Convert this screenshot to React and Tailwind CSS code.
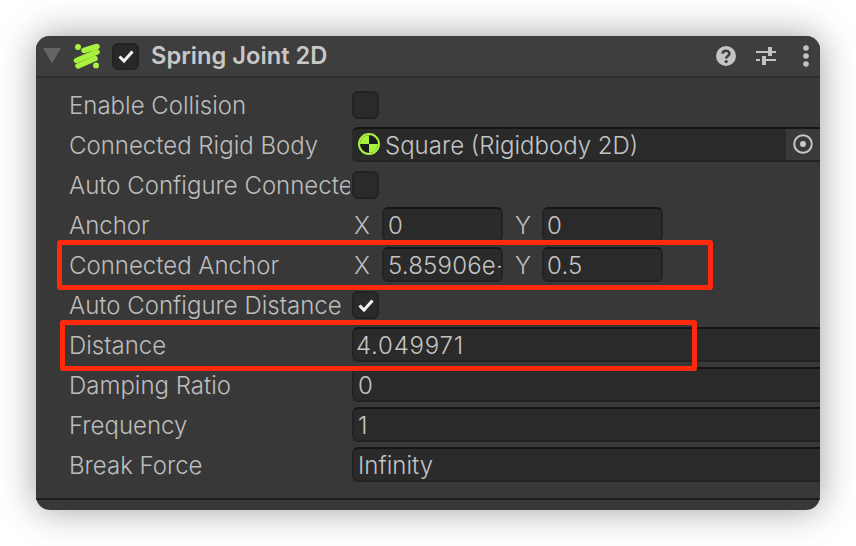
import React from 'react';

function SpringIcon() {
  return (
    <svg width="28" height="28" viewBox="0 0 28 28" className="shrink-0">
      <circle cx="6" cy="5" r="3" fill="#a9f23f" />
      <circle cx="24" cy="23.5" r="3" fill="#a9f23f" />
      <g stroke="#a9f23f" strokeWidth="5.5" strokeLinecap="round" fill="none">
        <path d="M12 8.5 L25 4.5" />
        <path d="M4.5 18.5 L25 10" />
        <path d="M6 24 L23 16.5" />
      </g>
    </svg>
  );
}

function Check() {
  return (
    <svg width="20" height="20" viewBox="0 0 20 20">
      <path d="M3.5 10.5 L8 15 L16.5 5.5" stroke="#f2f2f2" strokeWidth="3" fill="none" />
    </svg>
  );
}

function CheckBox({ checked }) {
  return (
    <div className="w-[27px] h-[28px] ml-[2px] shrink-0 rounded-md bg-[#2a2a2a] border-2 border-[#222222] flex items-center justify-center">
      {checked && <Check />}
    </div>
  );
}

function Field({ children, className }) {
  return (
    <div className={'h-[35px] mb-[2px] pt-[4px] rounded-md bg-[#2a2a2a] border-2 border-[#232323] border-t-[#161616] overflow-hidden whitespace-nowrap flex items-center text-[#c4c4c4] ' + className}>
      {children}
    </div>
  );
}

function Row({ label, children }) {
  return (
    <div className="h-10 flex items-center">
      <div className="w-[281px] pt-[1px] shrink-0 overflow-hidden whitespace-nowrap text-[#bdbdbd]">{label}</div>
      {children}
    </div>
  );
}

function Vector({ x, y }) {
  return (
    <div className="flex items-center text-[#bdbdbd] ml-[2px]">
      <span className="w-[30px] pl-[2px] pt-[1px]">X</span>
      <Field className="w-[121px] pl-[4px] tracking-[0.2px]">{x}</Field>
      <span className="w-[39px] pl-[12px] pt-[1px]">Y</span>
      <Field className="w-[121px] pl-[3px] tracking-[0.2px]">{y}</Field>
    </div>
  );
}

export default function App() {
  return (
    <div className="w-[856px] h-[546px] bg-white pt-[36px] pl-[36px] font-['Inter',sans-serif] font-[350] text-[24px] relative overflow-hidden">
      <div className="w-[784px] h-[474px] rounded-[14px] overflow-hidden bg-[#383838] shadow-[0_0_36px_rgba(0,0,0,0.38)] flex flex-col">
        {/* Header */}
        <div className="h-[42px] shrink-0 bg-[#3e3e3e] border-b-2 border-[#2e2e2e] flex items-center pl-[7px] pr-[8px]">
          <svg width="18" height="16" viewBox="0 0 18 16" className="shrink-0">
            <path d="M0 0 H18 L9 15.5 Z" fill="#646464" />
          </svg>
          <div className="ml-[11px]"><SpringIcon /></div>
          <div className="ml-[12px]">
            <div className="w-[27px] h-[27px] rounded-md bg-[#282828] border-2 border-[#222222] flex items-center justify-center"><Check /></div>
          </div>
          <div className="ml-[12px] font-semibold text-[23.7px] text-[#c8c8c8] whitespace-nowrap">Spring Joint 2D</div>
          <div className="ml-auto flex items-center">
            <svg width="20" height="20" viewBox="0 0 20 20">
              <circle cx="10" cy="10" r="10" fill="#c4c4c4" />
              <path d="M6.6 7.6 C6.8 3.8 13.4 3.8 13.4 7.6 C13.4 10 10.2 10 10.2 12.4" stroke="#3e3e3e" strokeWidth="2.6" fill="none" />
              <circle cx="10.2" cy="15.6" r="1.6" fill="#3e3e3e" />
            </svg>
            <svg width="22" height="20" viewBox="0 0 22 20" className="ml-[19px]">
              <g fill="#c4c4c4">
                <rect x="1" y="5" width="12" height="2" />
                <rect x="13" y="1" width="4" height="9" />
                <rect x="17" y="5" width="4" height="2" />
                <rect x="1" y="13" width="4" height="2" />
                <rect x="7" y="10" width="4" height="9" />
                <rect x="11" y="13" width="10" height="2" />
              </g>
            </svg>
            <svg width="8" height="22" viewBox="0 0 8 22" className="ml-[25px] mr-[2px]">
              <g fill="#c4c4c4">
                <circle cx="4" cy="3" r="2.8" />
                <circle cx="4" cy="11" r="2.8" />
                <circle cx="4" cy="19" r="2.8" />
              </g>
            </svg>
          </div>
        </div>

        {/* Properties */}
        <div className="pl-[33px] pt-[7px]">
          <Row label="Enable Collision"><CheckBox /></Row>
          <Row label="Connected Rigid Body">
            <div className="flex-1 ml-[2px] h-[35px] mb-[2px] rounded-l-md bg-[#2a2a2a] border-y-2 border-[#232323] border-t-[#161616] flex items-center overflow-hidden text-[#c4c4c4]">
              <svg width="22" height="22" viewBox="0 0 22 22" className="ml-[6px] shrink-0">
                <circle cx="11" cy="11" r="10" fill="#1d1d1d" stroke="#a9f23f" strokeWidth="2" />
                <path d="M11 11 V2 A9 9 0 0 0 2 11 Z" fill="#a9f23f" />
                <path d="M11 11 V20 A9 9 0 0 0 20 11 Z" fill="#a9f23f" />
              </svg>
              <span className="ml-[5px] mt-[3px] whitespace-nowrap">Square (Rigidbody 2D)</span>
              <div className="ml-auto w-[34px] h-full bg-[#3a3a3a] flex items-center justify-center">
                <svg width="20" height="20" viewBox="0 0 20 20">
                  <circle cx="10" cy="10" r="8.8" stroke="#c8c8c8" strokeWidth="2" fill="none" />
                  <circle cx="10" cy="10" r="3" fill="#c8c8c8" />
                </svg>
              </div>
            </div>
          </Row>
          <Row label="Auto Configure Connected Anchor"><CheckBox /></Row>
          <Row label="Anchor"><Vector x="0" y="0" /></Row>
          <Row label="Connected Anchor"><Vector x="5.85906e-" y="0.5" /></Row>
          <Row label="Auto Configure Distance"><CheckBox checked /></Row>
          <Row label="Distance"><Field className="flex-1 ml-[2px] pl-[2px] rounded-r-none border-r-0 tracking-[0.8px]">4.049971</Field></Row>
          <Row label="Damping Ratio"><Field className="flex-1 ml-[2px] pl-[4px] rounded-r-none border-r-0">0</Field></Row>
          <Row label="Frequency"><Field className="flex-1 ml-[2px] pl-[4px] rounded-r-none border-r-0">1</Field></Row>
          <Row label="Break Force"><Field className="flex-1 ml-[2px] pl-[4px] rounded-r-none border-r-0">Infinity</Field></Row>
        </div>

        <div className="mt-[13px] h-[2px] bg-[#1c1c1c]" />
      </div>

      {/* Red highlights drawn over the panel */}
      <div className="absolute left-[57px] top-[240px] w-[656px] h-[50px] border-[5px] border-[#ff2a0d] rounded-[3px]" />
      <div className="absolute left-[60px] top-[320px] w-[637px] h-[51px] border-[5px] border-[#ff2a0d] rounded-[3px]" />
    </div>
  );
}
